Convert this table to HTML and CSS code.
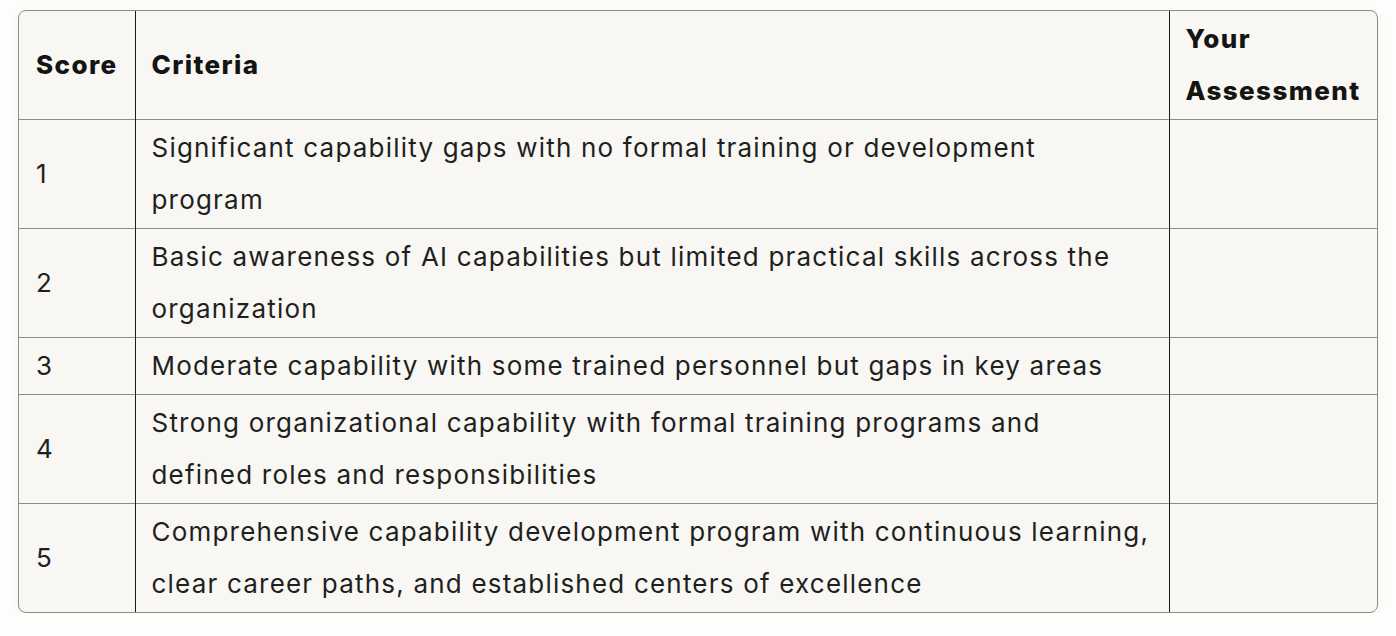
FILE: index.html
```html
<!DOCTYPE html>
<html>
<head>
<meta charset="utf-8">
<link rel="stylesheet" href="styles.css">
</head>
<body>
<div class="wrap">
<table class="grid">
<colgroup><col class="c1"><col class="c2"><col class="c3"></colgroup>
<thead>
<tr><th>Score</th><th>Criteria</th><th>Your<br>Assessment</th></tr>
</thead>
<tbody>
<tr><td>1</td><td>Significant capability gaps with no formal training or development<br>program</td><td></td></tr>
<tr><td>2</td><td>Basic awareness of AI capabilities but limited practical skills across the<br>organization</td><td></td></tr>
<tr><td>3</td><td>Moderate capability with some trained personnel but gaps in key areas</td><td></td></tr>
<tr><td>4</td><td>Strong organizational capability with formal training programs and<br>defined roles and responsibilities</td><td></td></tr>
<tr><td>5</td><td>Comprehensive capability development program with continuous learning,<br>clear career paths, and established centers of excellence</td><td></td></tr>
</tbody>
</table>
</div>
</body>
</html>
```
FILE: styles.css
```css
html, body { margin: 0; background: #fdfdfc; }
body { padding: 10px 18px 0 18px; font-family: "Inter", "Liberation Sans", sans-serif; color: #1f1f1e; }
.wrap {
  width: 1360px;
  box-sizing: border-box;
  border: 1px solid #8c8c8a;
  border-radius: 8px;
  overflow: hidden;
  background: #f8f7f4;
  box-shadow: 0 2px 10px rgba(0,0,0,0.05);
}
.grid { border-collapse: collapse; width: 100%; table-layout: fixed; }
.c1 { width: 116px; }
.c2 { width: 1034px; }
.c3 { width: auto; }
.grid th, .grid td {
  padding: 2px 10px 2px 17px;
  font-size: 26px;
  letter-spacing: 1.2px;
  line-height: 52px;
  vertical-align: middle;
  text-align: left;
  border-top: 1px solid #8c8c8a;
  white-space: nowrap;
}
.grid th { font-weight: 800; color: #141413; border-top: none; letter-spacing: 1.4px; }
.grid th + th, .grid td + td { border-left: 1px solid #1a1a1a; padding-left: 16px; }
.grid thead tr th { height: 104px; }
```
